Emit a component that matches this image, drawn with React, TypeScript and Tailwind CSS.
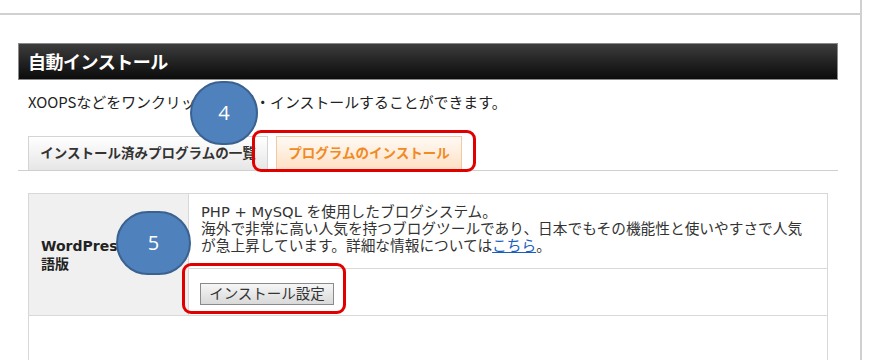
import React from 'react';

const jp = { fontFamily: '"DejaVu Sans", "Noto Sans CJK JP", sans-serif' };

function Marker({ n, className }: { n: string; className: string }) {
  return (
    <div
      className={`absolute rounded-full bg-[#4f81bd] border-2 border-[#3a6190] flex items-center justify-center text-white text-[20px] ${className}`}
      style={{ fontFamily: '"Open Sans", "Liberation Sans", sans-serif' }}
    >
      {n}
    </div>
  );
}

function App() {
  return (
    <div className="relative w-[876px] h-[360px] overflow-hidden bg-white flex" style={jp}>
      <div className="w-[862px] h-full border-r-2 border-[#d0d0d0]">
        <div className="h-[15px] border-b-2 border-[#d0d0d0]" />

        <div className="pl-[18px] pr-[22px] pt-[28px]">
          {/* section header */}
          <div className="h-[37px] flex items-center px-[9px] border border-[#8a8a8a] bg-gradient-to-b from-[#3d3d3d] to-[#0c0c0c]">
            <span className="text-white font-bold text-[18px] tracking-[-0.5px]" style={{ fontFamily: '"Noto Sans CJK JP", sans-serif' }}>
              自動インストール
            </span>
          </div>

          <p className="mt-[12px] px-[10px] text-[14.9px] leading-[20px] text-[#222]" style={{ fontFamily: '"Noto Sans CJK JP", sans-serif' }}>
            XOOPSなどをワンクリックで簡単・インストールすることができます。
          </p>

          {/* tabs */}
          <div className="mt-[24px] flex gap-[8px] pl-[10px] border-b border-[#cfcfcf]">
            <div className="h-[34px] w-[240px] flex items-center justify-center border border-b-0 border-[#d4d4d4] bg-gradient-to-b from-white to-[#e6e6e6] text-[#333] font-bold text-[13.5px]">
              インストール済みプログラムの一覧
            </div>
            <div className="h-[34px] w-[186px] flex items-center justify-center border border-b-0 border-[#f2c9a0] bg-gradient-to-b from-[#fffaf5] to-[#fde0c4] text-[#f08a24] font-bold text-[13.5px]">
              プログラムのインストール
            </div>
          </div>

          {/* program table */}
          <div className="mt-[22px] mx-[10px] border border-[#d8d8d8] text-[#333]">
            <div className="flex">
              <div className="w-[160px] shrink-0 bg-[#f0f0f0] border-r border-[#d8d8d8] flex items-center px-[12px]">
                <span className="font-bold text-[14px] leading-[18px] text-[#222]">
                  WordPress 日本
                  <br />
                  語版
                </span>
              </div>
              <div className="flex-1 flex flex-col">
                <div className="h-[75px] border-b border-[#d8d8d8] pl-[12px] pt-[9px] text-[14.7px] leading-[17px] whitespace-nowrap">
                  PHP + MySQL を使用したブログシステム。
                  <br />
                  海外で非常に高い人気を持つブログツールであり、日本でもその機能性と使いやすさで人気
                  <br />
                  が急上昇しています。詳細な情報については
                  <a href="#" className="text-[#1a5fc0] underline">こちら</a>。
                </div>
                <div className="h-[46px] pl-[11px] pt-[13px]">
                  <button className="h-[22px] w-[134px] border border-[#8a8a8a] bg-gradient-to-b from-[#f6f6f6] to-[#d9d9d9] text-[14.5px] leading-none text-[#333]">
                    インストール設定
                  </button>
                </div>
              </div>
            </div>
            <div className="h-[60px] border-t border-[#d8d8d8]" />
          </div>
        </div>
      </div>

      {/* annotations */}
      <div className="absolute left-[252px] top-[130px] w-[224px] h-[42px] border-[3px] border-[#e00000] rounded-[9px]" />
      <div className="absolute left-[182px] top-[263px] w-[164px] h-[51px] border-[3px] border-[#e00000] rounded-[9px]" />
      <Marker n="4" className="left-[190px] top-[81px] w-[68px] h-[64px]" />
      <Marker n="5" className="left-[116px] top-[211px] w-[75px] h-[64px]" />
    </div>
  );
}

export default App;
